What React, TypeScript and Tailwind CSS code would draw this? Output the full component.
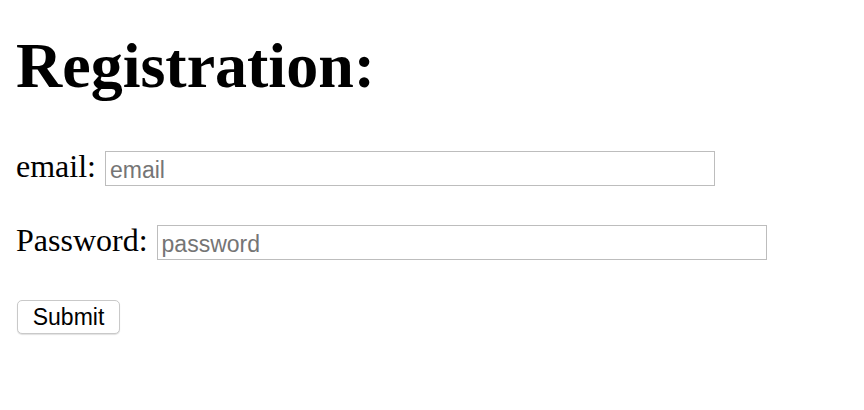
export default function App() {
  return (
    <div className="min-h-screen bg-white pl-4 text-black [font-family:'Liberation_Serif','Times_New_Roman',serif]">
      {/* heading */}
      <h1 className="pt-[34px] text-[64px] font-bold leading-[64px]">Registration:</h1>

      <form className="mt-[53px] flex flex-col" onSubmit={(e) => e.preventDefault()}>
        <div className="flex items-start">
          <label htmlFor="email" className="mr-[9px] text-[32px] leading-[30px]">
            email:
          </label>
          <input
            id="email"
            type="text"
            placeholder="email"
            className="h-[35px] w-[610px] border border-[#bdbdbd] bg-white px-[4px] pt-[4px] pb-0 text-[23px] text-black outline-none placeholder:text-[#757575] [font-family:'Liberation_Sans',Arial,sans-serif]"
          />
        </div>

        <div className="mt-[39px] flex items-start">
          <label htmlFor="password" className="mr-[9px] text-[32px] leading-[30px]">
            Password:
          </label>
          <input
            id="password"
            type="password"
            placeholder="password"
            className="h-[35px] w-[610px] border border-[#bdbdbd] bg-white px-[4px] pt-[4px] pb-0 text-[23px] text-black outline-none placeholder:text-[#757575] [font-family:'Liberation_Sans',Arial,sans-serif]"
          />
        </div>

        <div className="mt-[40px] flex">
          <button
            type="submit"
            className="ml-px flex h-[34px] w-[103px] items-center justify-center rounded-[5px] border border-[#c9c9c9] bg-white pt-px text-[23px] leading-none text-black shadow-[0_1px_1px_rgba(0,0,0,0.12)] [font-family:'Liberation_Sans',Arial,sans-serif]"
          >
            Submit
          </button>
        </div>
      </form>
    </div>
  );
}
